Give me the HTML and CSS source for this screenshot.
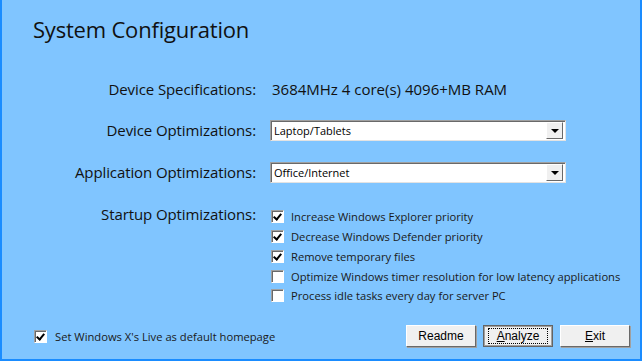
FILE: index.html
```html
<!DOCTYPE html>
<html lang="en">
<head>
    <meta charset="UTF-8">
    <title>System Configuration</title>
    <link rel="stylesheet" href="styles.css">
</head>
<body>
    <div class="window">
        <h1>System Configuration</h1>

        <div class="form">
            <div class="label spec-row">Device Specifications:</div>
            <div class="value spec-row">3684MHz 4 core(s) 4096+MB RAM</div>

            <div class="label combo-row">Device Optimizations:</div>
            <div class="combo-row">
                <div class="combo"><span>Laptop/Tablets</span><i class="drop"></i></div>
            </div>

            <div class="label combo-row">Application Optimizations:</div>
            <div class="combo-row">
                <div class="combo"><span>Office/Internet</span><i class="drop"></i></div>
            </div>

            <div class="label startup">Startup Optimizations:</div>
            <ul class="checks">
                <li><span class="box checked"></span>Increase Windows Explorer priority</li>
                <li><span class="box checked"></span>Decrease Windows Defender priority</li>
                <li><span class="box checked"></span>Remove temporary files</li>
                <li><span class="box"></span>Optimize Windows timer resolution for low latency applications</li>
                <li><span class="box"></span>Process idle tasks every day for server PC</li>
            </ul>
        </div>

        <div class="footer">
            <label class="homepage"><span class="box checked"></span>Set Windows X's Live as default homepage</label>
            <div class="buttons">
                <button>Readme</button>
                <button class="default"><span><u>A</u>nalyze</span></button>
                <button><u>E</u>xit</button>
            </div>
        </div>
    </div>
</body>
</html>
```

FILE: styles.css
```css
* {
    box-sizing: border-box;
}
body {
    margin: 0;
    font-family: 'Open Sans', 'Noto Sans', sans-serif;
    color: #111;
}
.window {
    width: 642px;
    height: 361px;
    background: #80c5ff;
    border: 2px solid #1a8cff;
    border-top: none;
    display: flex;
    flex-direction: column;
}
h1 {
    margin: 14px 0 0 31px;
    font-size: 22px;
    font-weight: 400;
    line-height: 30px;
    letter-spacing: -0.2px;
}
/* Form grid */
.form {
    display: grid;
    grid-template-columns: 254px 1fr;
    column-gap: 14px;
    margin-top: 35px;
    font-size: 15px;
}
.label {
    text-align: right;
    letter-spacing: -0.1px;
}
.spec-row {
    line-height: 20px;
}
.value {
    padding-left: 2px;
}
.combo-row {
    margin-top: 21px;
    line-height: 21px;
}
.combo {
    width: 296px;
    height: 21px;
    background: white;
    border: 1px solid;
    border-color: #a0a0a0 #e3e3e3 #e3e3e3 #a0a0a0;
    box-shadow: inset 1px 1px 0 #696969;
    display: flex;
    align-items: center;
    justify-content: space-between;
    font-size: 11px;
    padding-left: 3px;
    color: #000;
}
.drop {
    width: 17px;
    height: 17px;
    margin-right: 2px;
    background: #f0f0f0;
    border: 1px solid;
    border-color: #fff #696969 #696969 #fff;
    display: flex;
    align-items: center;
    justify-content: center;
}
.drop::after {
    content: '';
    border-left: 4px solid transparent;
    border-right: 4px solid transparent;
    border-top: 4px solid #000;
}
.startup {
    margin-top: 21px;
    line-height: 20px;
}
.checks {
    list-style: none;
    margin: 24px 0 0 0;
    padding: 0 0 0 1px;
    font-size: 11.2px;
    color: #1a1a1a;
}
.checks li, .homepage {
    display: flex;
    align-items: center;
    gap: 7px;
    height: 19.75px;
}
.box {
    width: 13px;
    height: 13px;
    background: white;
    border: 1px solid;
    border-color: #a0a0a0 #fff #fff #a0a0a0;
    box-shadow: inset 1px 1px 0 #696969;
    position: relative;
    flex: none;
}
.box.checked::after {
    content: '';
    position: absolute;
    left: 3px;
    top: 1px;
    width: 3px;
    height: 6px;
    border: solid #000;
    border-width: 0 2px 2px 0;
    transform: rotate(40deg);
}
/* Footer */
.footer {
    margin-top: auto;
    display: flex;
    align-items: center;
    justify-content: space-between;
    padding: 0 9px 12px 32px;
}
.homepage {
    font-size: 11.2px;
    gap: 8px;
    color: #1a1a1a;
}
.buttons {
    display: flex;
    gap: 6px;
}
.buttons button {
    width: 70px;
    height: 22px;
    margin-right: 1px;
    font-family: 'Liberation Sans', sans-serif;
    font-size: 12px;
    color: #000;
    background: #f0f0f0;
    border: 1px solid;
    border-color: #fff #696969 #696969 #fff;
    box-shadow: 1px 1px 0 #a0a0a0;
    padding: 0;
}
.buttons button.default {
    border: 1px solid #646464;
    box-shadow: inset 0 0 0 1px #a0a0a0;
    display: flex;
    align-items: center;
    justify-content: center;
}
.default span {
    border: 1px dotted #000;
    width: 60px;
    height: 16px;
    line-height: 14px;
}
```
